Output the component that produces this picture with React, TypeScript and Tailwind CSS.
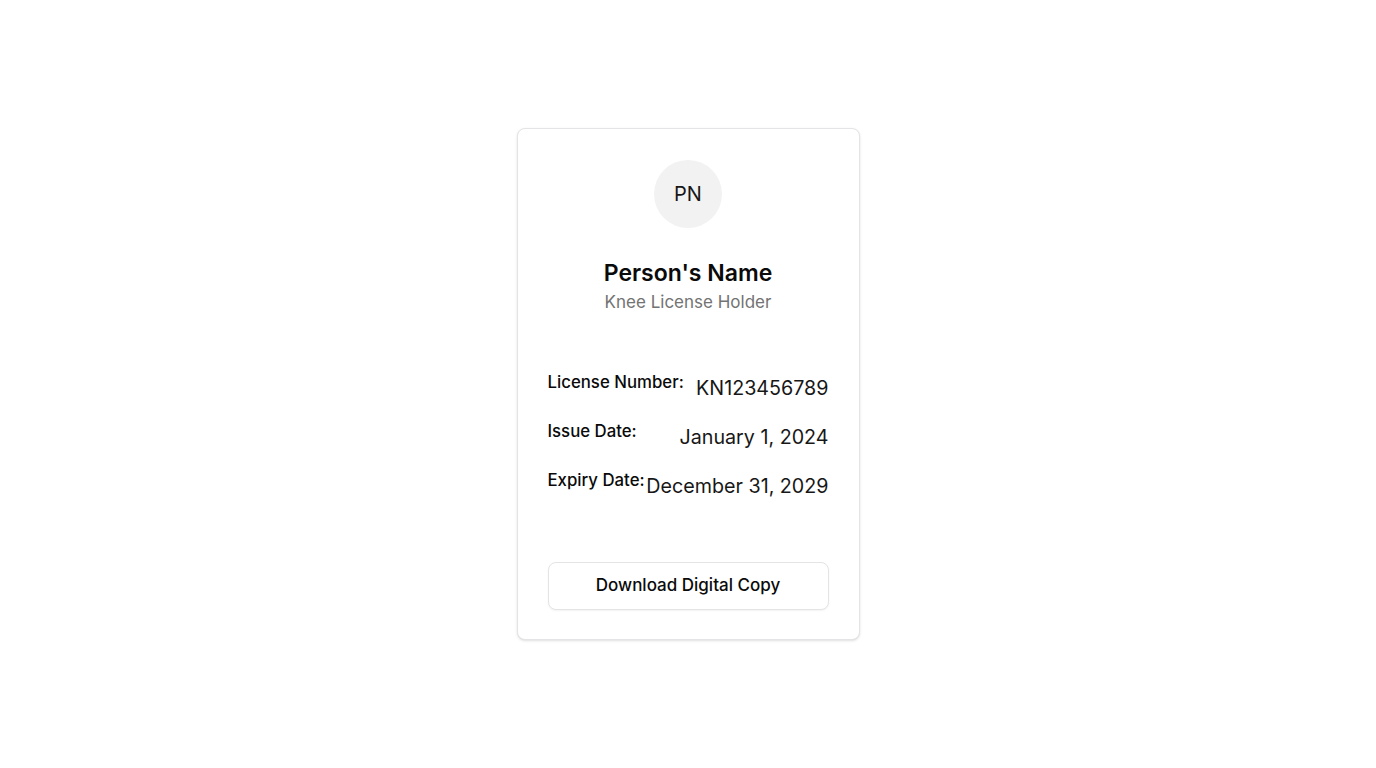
import React from "react";

const rows = [
  { label: "License Number:", value: "KN123456789" },
  { label: "Issue Date:", value: "January 1, 2024" },
  { label: "Expiry Date:", value: "December 31, 2029" },
];

export default function App() {
  return (
    <div
      className="min-h-screen w-full bg-white flex items-center justify-center"
      style={{ fontFamily: "Inter, 'Noto Sans', sans-serif" }}
    >
      <div className="w-[343px] rounded-lg border border-[#e4e4e7] bg-white shadow-sm px-[30px] pt-[31px] pb-[29px] flex flex-col -mt-px">
        <div className="flex justify-center">
          <div className="w-[68px] h-[68px] rounded-full bg-[#f2f2f2] flex items-center justify-center text-xl text-[#171717]">
            PN
          </div>
        </div>
        <div className="mt-[30px] text-center text-[23px] leading-[30px] font-semibold text-[#0a0a0a]">
          Person's Name
        </div>
        <div className="text-center text-[17px] leading-7 text-[#737373]">
          Knee License Holder
        </div>
        <div className="mt-[53px] flex flex-col gap-2.5">
          {rows.map((r) => (
            <div key={r.label} className="flex items-start justify-between whitespace-nowrap">
              <span className="shrink-0 mt-px text-[16.8px] leading-6 font-medium text-[#0a0a0a]">{r.label}</span>
              <span className="shrink-0 text-[19.7px] leading-[39px] text-[#171717]">{r.value}</span>
            </div>
          ))}
        </div>
        <button className="mt-[56px] h-12 w-full rounded-lg border border-[#e4e4e7] bg-white text-[17px] font-medium text-[#0a0a0a] shadow-xs">
          Download Digital Copy
        </button>
      </div>
    </div>
  );
}
